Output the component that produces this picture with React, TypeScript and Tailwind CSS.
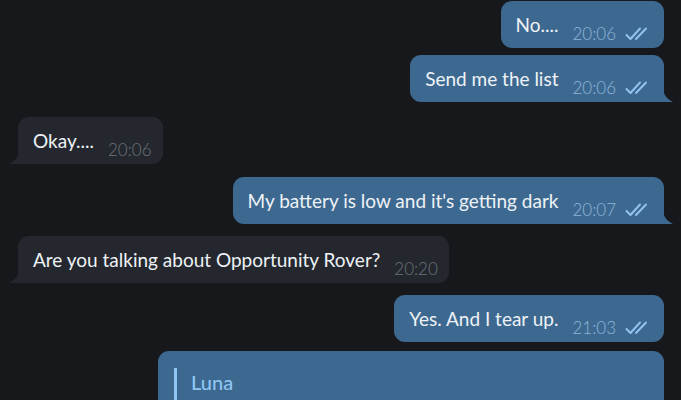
import React from "react";

type Msg = {
  text: string;
  time: string;
  out: boolean;
  tail: boolean;
  gap: string;
};

const messages: Msg[] = [
  { text: "No....", time: "20:06", out: true, tail: false, gap: "mt-[1px]" },
  { text: "Send me the list", time: "20:06", out: true, tail: true, gap: "mt-[7px]" },
  { text: "Okay....", time: "20:06", out: false, tail: true, gap: "mt-[15px]" },
  { text: "My battery is low and it's getting dark", time: "20:07", out: true, tail: true, gap: "mt-[13px]" },
  { text: "Are you talking about Opportunity Rover?", time: "20:20", out: false, tail: true, gap: "mt-[12px]" },
  { text: "Yes. And I tear up.", time: "21:03", out: true, tail: false, gap: "mt-[12px]" },
];

function Checks() {
  return (
    <svg width="26" height="14" viewBox="0 0 26 14" fill="none" className="ml-[9px] mb-[1px]">
      <path d="M1.5 8 L5.5 12 L15 1.5" stroke="#92c4f0" strokeWidth="1.9" strokeLinecap="round" strokeLinejoin="round" />
      <path d="M11 12 L21 1.5" stroke="#92c4f0" strokeWidth="1.9" strokeLinecap="round" />
    </svg>
  );
}

function Tail({ out }: { out: boolean }) {
  if (out) {
    return (
      <svg width="10" height="14" viewBox="0 0 10 14" className="absolute bottom-0 right-[-9px]">
        <path d="M0 0 C0.5 7 4 11 10 14 L0 14 Z" fill="#3d6990" />
      </svg>
    );
  }
  return (
    <svg width="10" height="14" viewBox="0 0 10 14" className="absolute bottom-0 left-[-9px]">
      <path d="M10 0 C9.5 7 6 11 0 14 L10 14 Z" fill="#24282e" />
    </svg>
  );
}

function Bubble({ m }: { m: Msg }) {
  const base = m.out ? "bg-[#3d6990]" : "bg-[#24282e]";
  const corner = m.tail ? (m.out ? "rounded-br-none" : "rounded-bl-none") : "";
  return (
    <div className={`flex ${m.gap} ${m.out ? "justify-end pr-[17px]" : "justify-start pl-[18px]"}`}>
      <div className={`relative h-[47px] rounded-[11px] ${base} ${corner} flex items-start pl-[15px] ${m.out ? "pr-[13px]" : "pr-[11px]"}`}>
        <span className="pt-[12px] text-[19px] leading-[24px] text-[#eef2f6] whitespace-nowrap">{m.text}</span>
        <span className={`ml-[14px] mt-[24px] flex items-center text-[17px] leading-[18px] font-light whitespace-nowrap ${m.out ? "text-[#8db6da]" : "text-[#6b737d]"}`}>
          {m.time}
          {m.out && <Checks />}
        </span>
        {m.tail && <Tail out={m.out} />}
      </div>
    </div>
  );
}

export default function App() {
  return (
    <div className="w-[681px] h-[400px] overflow-hidden bg-[#17181c] flex flex-col font-['Lato',sans-serif]">
      {messages.map((m, i) => (
        <Bubble key={i} m={m} />
      ))}
      <div className="flex justify-end pr-[17px] mt-[9px]">
        <div className="w-[506px] h-[100px] rounded-[11px] bg-[#3d6990] pl-[16px] pt-[17px]">
          <div className="border-l-[3px] border-[#8fc6f2] pl-[14px] h-[80px]">
            <span className="block pt-[3px] text-[20px] leading-[22px] font-medium text-[#8fc6f2]">Luna</span>
          </div>
        </div>
      </div>
    </div>
  );
}
